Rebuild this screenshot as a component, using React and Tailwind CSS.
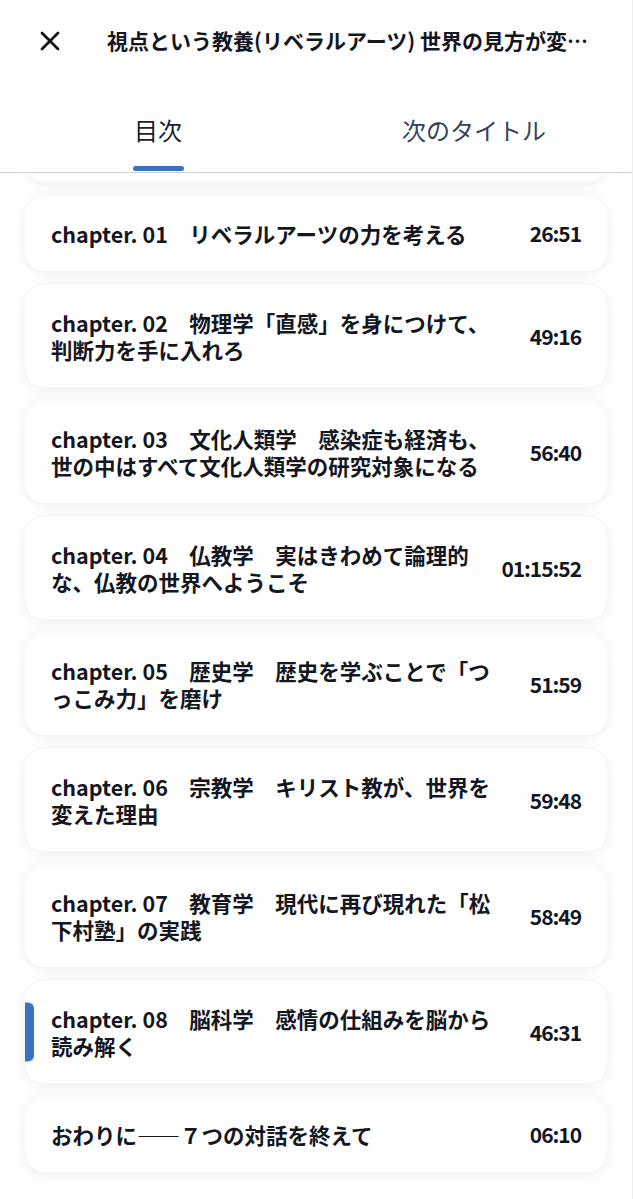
const chapters = [
  { id: 1, title: "chapter. 01\u3000リベラルアーツの力を考える", time: "26:51" },
  { id: 2, title: "chapter. 02\u3000物理学「直感」を身につけて、判断力を手に入れろ", time: "49:16" },
  { id: 3, title: "chapter. 03\u3000文化人類学\u3000感染症も経済も、世の中はすべて文化人類学の研究対象になる", time: "56:40" },
  { id: 4, title: "chapter. 04\u3000仏教学\u3000実はきわめて論理的な、仏教の世界へようこそ", time: "01:15:52" },
  { id: 5, title: "chapter. 05\u3000歴史学\u3000歴史を学ぶことで「つっこみ力」を磨け", time: "51:59" },
  { id: 6, title: "chapter. 06\u3000宗教学\u3000キリスト教が、世界を変えた理由", time: "59:48" },
  { id: 7, title: "chapter. 07\u3000教育学\u3000現代に再び現れた「松下村塾」の実践", time: "58:49" },
  { id: 8, title: "chapter. 08\u3000脳科学\u3000感情の仕組みを脳から読み解く", time: "46:31", current: true },
  { id: 9, title: "おわりに――７つの対話を終えて", time: "06:10" },
];

const font = "font-['Noto_Sans_CJK_JP','Noto_Sans',sans-serif]";

function CloseIcon() {
  return (
    <svg width="20" height="20" viewBox="0 0 20 20" className="shrink-0 text-[#111]">
      <path d="M2 2L18 18M18 2L2 18" stroke="currentColor" strokeWidth="2.8" strokeLinecap="round" />
    </svg>
  );
}

function ChapterCard({ chapter }) {
  return (
    <div className="relative flex items-center gap-8 rounded-[20px] bg-white px-[26px] py-6 shadow-[0_2px_14px_rgba(0,0,0,0.08)]">
      {chapter.current && (
        <span className="absolute left-0 top-1/2 h-[59px] w-[9px] -translate-y-1/2 rounded-r-md bg-[#3872c6]" />
      )}
      <p className="min-w-0 flex-1 text-[21.5px] font-bold leading-[27px] text-[#14171f]">
        {chapter.title}
      </p>
      <span className="shrink-0 text-[21px] font-bold leading-[27px] tracking-tighter text-[#14171f]">
        {chapter.time}
      </span>
    </div>
  );
}

export default function App() {
  return (
    <div className={`${font} flex h-[1199px] w-[633px] flex-col overflow-hidden border-r border-[#eeeeee] bg-white`}>
      <header className="shrink-0 border-b border-[#cfd2da] bg-white">
        <div className="flex h-[82px] items-center gap-[47px] pl-10 pr-6">
          <CloseIcon />
          <h1 className="truncate text-[21px] font-bold text-[#14171f]">
            視点という教養(リベラルアーツ) 世界の見方が変わる7つの対話
          </h1>
        </div>
        <nav className="flex h-[90px]">
          <button className="flex flex-1 flex-col items-center justify-end">
            <span className="text-[24px] leading-[32px] text-[#1b1e26]">目次</span>
            <span className="mb-px mt-5 h-[5px] w-[51px] rounded-full bg-[#3872c6]" />
          </button>
          <button className="flex flex-1 flex-col items-center justify-end">
            <span className="text-[24px] leading-[32px] text-[#34425c]">次のタイトル</span>
            <span className="mb-px mt-5 h-[5px] w-[51px]" />
          </button>
        </nav>
      </header>

      <div className="flex-1 overflow-hidden">
        <div className="-mt-[92px] flex flex-col gap-[14px] px-[25px] pb-8 pt-0">
          <div className="h-[101px] rounded-[20px] bg-white shadow-[0_2px_14px_rgba(0,0,0,0.08)]" />
          {chapters.map((c) => (
            <ChapterCard key={c.id} chapter={c} />
          ))}
        </div>
      </div>
    </div>
  );
}
